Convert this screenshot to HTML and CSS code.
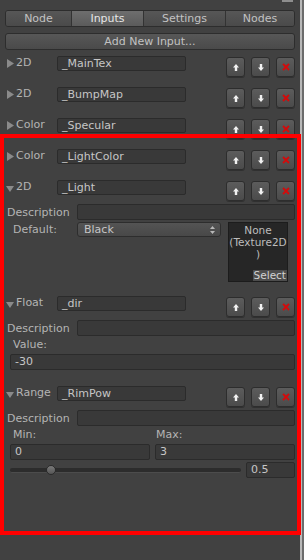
FILE: index.html
```html
<!DOCTYPE html>
<html lang="en">
<head>
    <meta charset="UTF-8">
    <meta name="viewport" content="width=device-width, initial-scale=1.0">
    <title>Shader Inputs</title>
    <link rel="stylesheet" href="styles.css">
</head>
<body>
    <div class="inspector">
        <div class="panel">
            <div class="topline"><span class="topbar"></span></div>

            <div class="tabs">
                <div class="tab tab-node">Node</div>
                <div class="tab tab-inputs active">Inputs</div>
                <div class="tab tab-settings">Settings</div>
                <div class="tab tab-nodes">Nodes</div>
            </div>

            <div class="add-btn">Add New Input...</div>

            <div class="inputs">
                <!-- collapsed -->
                <div class="input collapsed">
                    <div class="input-head">
                        <div class="fold">
                            <svg class="tri" width="8" height="9" viewBox="0 0 8 9"><polygon points="1,0 8,4.5 1,9"/></svg>
                            <span class="type">2D</span>
                        </div>
                        <div class="field name-field">_MainTex</div>
                        <div class="actions">
                            <span class="icon-btn"><svg width="6" height="7" viewBox="0 0 6 7"><polygon points="3,0 6,3.5 4.2,3.5 4.2,7 1.8,7 1.8,3.5 0,3.5"/></svg></span>
                            <span class="icon-btn"><svg width="6" height="7" viewBox="0 0 6 7"><polygon points="1.8,0 4.2,0 4.2,3.5 6,3.5 3,7 0,3.5 1.8,3.5"/></svg></span>
                            <span class="icon-btn remove"><svg width="8" height="8" viewBox="0 0 8 8"><path d="M1 1L7 7M7 1L1 7"/></svg></span>
                        </div>
                    </div>
                </div>

                <div class="input collapsed">
                    <div class="input-head">
                        <div class="fold">
                            <svg class="tri" width="8" height="9" viewBox="0 0 8 9"><polygon points="1,0 8,4.5 1,9"/></svg>
                            <span class="type">2D</span>
                        </div>
                        <div class="field name-field">_BumpMap</div>
                        <div class="actions">
                            <span class="icon-btn"><svg width="6" height="7" viewBox="0 0 6 7"><polygon points="3,0 6,3.5 4.2,3.5 4.2,7 1.8,7 1.8,3.5 0,3.5"/></svg></span>
                            <span class="icon-btn"><svg width="6" height="7" viewBox="0 0 6 7"><polygon points="1.8,0 4.2,0 4.2,3.5 6,3.5 3,7 0,3.5 1.8,3.5"/></svg></span>
                            <span class="icon-btn remove"><svg width="8" height="8" viewBox="0 0 8 8"><path d="M1 1L7 7M7 1L1 7"/></svg></span>
                        </div>
                    </div>
                </div>

                <div class="input collapsed">
                    <div class="input-head">
                        <div class="fold">
                            <svg class="tri" width="8" height="9" viewBox="0 0 8 9"><polygon points="1,0 8,4.5 1,9"/></svg>
                            <span class="type">Color</span>
                        </div>
                        <div class="field name-field">_Specular</div>
                        <div class="actions">
                            <span class="icon-btn"><svg width="6" height="7" viewBox="0 0 6 7"><polygon points="3,0 6,3.5 4.2,3.5 4.2,7 1.8,7 1.8,3.5 0,3.5"/></svg></span>
                            <span class="icon-btn"><svg width="6" height="7" viewBox="0 0 6 7"><polygon points="1.8,0 4.2,0 4.2,3.5 6,3.5 3,7 0,3.5 1.8,3.5"/></svg></span>
                            <span class="icon-btn remove"><svg width="8" height="8" viewBox="0 0 8 8"><path d="M1 1L7 7M7 1L1 7"/></svg></span>
                        </div>
                    </div>
                </div>

                <div class="input collapsed">
                    <div class="input-head">
                        <div class="fold">
                            <svg class="tri" width="8" height="9" viewBox="0 0 8 9"><polygon points="1,0 8,4.5 1,9"/></svg>
                            <span class="type">Color</span>
                        </div>
                        <div class="field name-field">_LightColor</div>
                        <div class="actions">
                            <span class="icon-btn"><svg width="6" height="7" viewBox="0 0 6 7"><polygon points="3,0 6,3.5 4.2,3.5 4.2,7 1.8,7 1.8,3.5 0,3.5"/></svg></span>
                            <span class="icon-btn"><svg width="6" height="7" viewBox="0 0 6 7"><polygon points="1.8,0 4.2,0 4.2,3.5 6,3.5 3,7 0,3.5 1.8,3.5"/></svg></span>
                            <span class="icon-btn remove"><svg width="8" height="8" viewBox="0 0 8 8"><path d="M1 1L7 7M7 1L1 7"/></svg></span>
                        </div>
                    </div>
                </div>

                <!-- texture, expanded -->
                <div class="input expanded tex-input">
                    <div class="input-head">
                        <div class="fold">
                            <svg class="tri" width="8" height="9" viewBox="0 0 8 9"><polygon points="0,3 8,3 4,9"/></svg>
                            <span class="type">2D</span>
                        </div>
                        <div class="field name-field">_Light</div>
                        <div class="actions">
                            <span class="icon-btn"><svg width="6" height="7" viewBox="0 0 6 7"><polygon points="3,0 6,3.5 4.2,3.5 4.2,7 1.8,7 1.8,3.5 0,3.5"/></svg></span>
                            <span class="icon-btn"><svg width="6" height="7" viewBox="0 0 6 7"><polygon points="1.8,0 4.2,0 4.2,3.5 6,3.5 3,7 0,3.5 1.8,3.5"/></svg></span>
                            <span class="icon-btn remove"><svg width="8" height="8" viewBox="0 0 8 8"><path d="M1 1L7 7M7 1L1 7"/></svg></span>
                        </div>
                    </div>
                    <div class="desc-row">
                        <span class="desc-label">Description</span>
                        <div class="field desc-field"></div>
                    </div>
                    <div class="default-row">
                        <span class="sub-label default-label">Default:</span>
                        <div class="dropdown">
                            <span>Black</span>
                            <svg width="5" height="8" viewBox="0 0 5 8"><polygon points="2.5,0 5,3 0,3"/><polygon points="0,5 5,5 2.5,8"/></svg>
                        </div>
                        <div class="tex-box">
                            <div class="tex-name">None<br>(Texture2D<br>)</div>
                            <span class="tex-select">Select</span>
                        </div>
                    </div>
                </div>

                <!-- float, expanded -->
                <div class="input expanded float-input">
                    <div class="input-head">
                        <div class="fold">
                            <svg class="tri" width="8" height="9" viewBox="0 0 8 9"><polygon points="0,3 8,3 4,9"/></svg>
                            <span class="type">Float</span>
                        </div>
                        <div class="field name-field">_dir</div>
                        <div class="actions">
                            <span class="icon-btn"><svg width="6" height="7" viewBox="0 0 6 7"><polygon points="3,0 6,3.5 4.2,3.5 4.2,7 1.8,7 1.8,3.5 0,3.5"/></svg></span>
                            <span class="icon-btn"><svg width="6" height="7" viewBox="0 0 6 7"><polygon points="1.8,0 4.2,0 4.2,3.5 6,3.5 3,7 0,3.5 1.8,3.5"/></svg></span>
                            <span class="icon-btn remove"><svg width="8" height="8" viewBox="0 0 8 8"><path d="M1 1L7 7M7 1L1 7"/></svg></span>
                        </div>
                    </div>
                    <div class="desc-row">
                        <span class="desc-label">Description</span>
                        <div class="field desc-field"></div>
                    </div>
                    <div class="sub-label value-label">Value:</div>
                    <div class="field value-field">-30</div>
                </div>

                <!-- range, expanded -->
                <div class="input expanded range-input">
                    <div class="input-head">
                        <div class="fold">
                            <svg class="tri" width="8" height="9" viewBox="0 0 8 9"><polygon points="0,3 8,3 4,9"/></svg>
                            <span class="type">Range</span>
                        </div>
                        <div class="field name-field">_RimPow</div>
                        <div class="actions">
                            <span class="icon-btn"><svg width="6" height="7" viewBox="0 0 6 7"><polygon points="3,0 6,3.5 4.2,3.5 4.2,7 1.8,7 1.8,3.5 0,3.5"/></svg></span>
                            <span class="icon-btn"><svg width="6" height="7" viewBox="0 0 6 7"><polygon points="1.8,0 4.2,0 4.2,3.5 6,3.5 3,7 0,3.5 1.8,3.5"/></svg></span>
                            <span class="icon-btn remove"><svg width="8" height="8" viewBox="0 0 8 8"><path d="M1 1L7 7M7 1L1 7"/></svg></span>
                        </div>
                    </div>
                    <div class="desc-row">
                        <span class="desc-label">Description</span>
                        <div class="field desc-field"></div>
                    </div>
                    <div class="minmax-labels">
                        <span class="sub-label min-label">Min:</span>
                        <span class="sub-label max-label">Max:</span>
                    </div>
                    <div class="minmax-fields">
                        <div class="field">0</div>
                        <div class="field">3</div>
                    </div>
                    <div class="slider-row">
                        <div class="slider">
                            <div class="slider-track"></div>
                            <div class="slider-thumb" style="left: 36px;"></div>
                        </div>
                        <div class="field slider-value">0.5</div>
                    </div>
                </div>
            </div>
        </div>
        <div class="scrollbar"></div>
        <div class="highlight"></div>
    </div>
</body>
</html>
```

FILE: styles.css
```css
:root {
    --bg: #414141;
    --text: #b4b4b4;
    --field-bg: #393939;
    --field-border: #2b2b2b;
    --btn-top: #575757;
    --btn-bottom: #4a4a4a;
    --btn-border: #2d2d2d;
}

* {
    margin: 0;
    padding: 0;
    box-sizing: border-box;
}

body {
    width: 304px;
    height: 560px;
    overflow: hidden;
    background-color: var(--bg);
    color: var(--text);
    font-family: "DejaVu Sans", Verdana, sans-serif;
    font-size: 11px;
    line-height: 15px;
}

.inspector {
    display: flex;
    height: 560px;
    position: relative;
}

.panel {
    width: 300px;
    flex: none;
    padding: 0 5px;
}

.topline {
    height: 3px;
    display: flex;
    justify-content: flex-end;
}

.topbar {
    width: 11px;
    height: 2px;
    margin-right: 2px;
    background-color: #8e8e8e;
}

.scrollbar {
    width: 4px;
    flex: none;
    background: linear-gradient(90deg, #b9b9b9 0 2px, #6c6c6c 2px);
}

/* toolbar */
.tabs {
    display: flex;
    height: 17px;
    margin-top: 7px;
    border: 1px solid var(--btn-border);
    border-radius: 3px;
    overflow: hidden;
}

.tab {
    display: flex;
    align-items: center;
    justify-content: center;
    background: linear-gradient(var(--btn-top), var(--btn-bottom));
    color: #c2c2c2;
    border-left: 1px solid #333;
}

.tab:first-child {
    border-left: none;
}

.tab-node { width: 65px; }
.tab-inputs { width: 72px; }
.tab-settings { width: 82px; }
.tab-nodes { flex: 1; }

.tab.active {
    background: linear-gradient(#6e6e6e, #5b5b5b);
    color: #e6e6e6;
}

.add-btn {
    height: 17px;
    margin-top: 6px;
    display: flex;
    align-items: center;
    justify-content: center;
    background: linear-gradient(var(--btn-top), var(--btn-bottom));
    border: 1px solid var(--btn-border);
    border-radius: 3px;
    color: #c2c2c2;
}

.inputs {
    margin-top: 6px;
}

/* input rows */
.input-head {
    display: flex;
    align-items: flex-start;
    height: 21px;
}

.input.collapsed {
    margin-bottom: 10px;
}

.fold {
    width: 52px;
    height: 15px;
    display: flex;
    align-items: center;
}

.tri {
    margin-left: 1px;
    margin-right: 2px;
    fill: #8a8a8a;
}

.type {
    color: var(--text);
    line-height: 13px;
    align-self: flex-start;
}

.field {
    height: 15px;
    padding: 0 4px;
    background-color: var(--field-bg);
    border: 1px solid var(--field-border);
    border-radius: 2px;
    color: #c6c6c6;
    line-height: 13px;
    white-space: nowrap;
    overflow: hidden;
}

.name-field {
    width: 129px;
}

.actions {
    display: flex;
    gap: 6px;
    margin-left: auto;
    margin-top: 1px;
}

.icon-btn {
    width: 19px;
    height: 20px;
    display: flex;
    align-items: center;
    justify-content: center;
    background: linear-gradient(#5c5c5c, #4b4b4b);
    border: 1px solid var(--btn-border);
    border-radius: 3px;
    box-shadow: 0 1px 0 rgba(0, 0, 0, 0.25);
}

.icon-btn svg {
    fill: #f2f2f2;
}

.icon-btn.remove path {
    stroke: #d40a0a;
    stroke-width: 1.8;
}

/* expanded body */
.desc-row {
    display: flex;
    align-items: center;
    margin-top: 3px;
}

.desc-label {
    width: 72px;
    padding-left: 2px;
    flex: none;
}

.desc-field {
    flex: 1;
    height: 16px;
}

.sub-label {
    padding-left: 8px;
}

.default-row {
    display: flex;
    align-items: flex-start;
    margin-top: 2px;
}

.default-label {
    width: 72px;
    flex: none;
}

.dropdown {
    width: 144px;
    height: 15px;
    display: flex;
    align-items: center;
    justify-content: space-between;
    padding: 0 5px 0 6px;
    background: linear-gradient(#545454, #484848);
    border: 1px solid var(--btn-border);
    border-radius: 3px;
    color: #c6c6c6;
}

.dropdown svg {
    fill: #b8b8b8;
}

.tex-box {
    width: 60px;
    height: 60px;
    margin-left: 7px;
    display: flex;
    flex-direction: column;
    align-items: center;
    background-color: #262626;
    border: 1px solid #1c1c1c;
}

.tex-name {
    text-align: center;
    font-size: 10.5px;
    line-height: 12px;
    color: #bdbdbd;
    margin-top: 1px;
}

.tex-select {
    align-self: flex-end;
    margin-top: auto;
    padding: 0 1px;
    line-height: 11px;
    font-size: 10.5px;
    background-color: #4d4d4d;
    color: #d2d2d2;
}

.tex-input {
    margin-bottom: 14px;
}

.value-label {
    height: 18px;
    line-height: 18px;
}

.value-field {
    margin-left: 5px;
    height: 16px;
}

.float-input {
    margin-bottom: 16px;
}

.minmax-labels,
.minmax-fields {
    display: grid;
    grid-template-columns: 140px 140px;
    gap: 5px;
    margin-left: 5px;
}

.minmax-labels {
    height: 18px;
    line-height: 18px;
}

.min-label { padding-left: 3px; }
.max-label { padding-left: 1px; }

.minmax-fields .field {
    height: 16px;
}

.slider-row {
    display: flex;
    align-items: center;
    margin-top: 2px;
    margin-left: 5px;
    gap: 5px;
}

.slider {
    position: relative;
    width: 231px;
    height: 16px;
    display: flex;
    align-items: center;
}

.slider-track {
    width: 100%;
    height: 5px;
    background-color: #2c2c2c;
    border-bottom: 1px solid #4c4c4c;
    border-radius: 2px;
}

.slider-thumb {
    position: absolute;
    top: 3px;
    width: 10px;
    height: 10px;
    border-radius: 50%;
    background: linear-gradient(#7a7a7a, #555);
    border: 1px solid #2a2a2a;
}

.slider-value {
    flex: 1;
    height: 16px;
}

/* annotation overlay */
.highlight {
    position: absolute;
    left: 0;
    top: 134px;
    width: 301px;
    height: 401px;
    border: 4px solid #ff0000;
    pointer-events: none;
}
```
